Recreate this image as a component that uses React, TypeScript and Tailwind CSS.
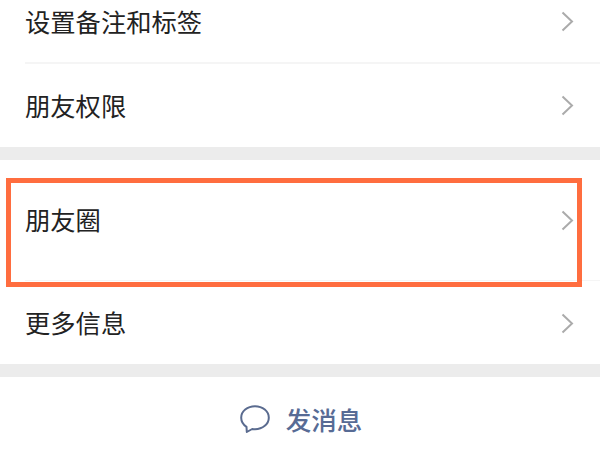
import React from "react";

const font = { fontFamily: '"Noto Sans CJK SC", "Liberation Sans", sans-serif' };

const Chevron = () => (
  <svg width="13" height="21" viewBox="0 0 13 21" fill="none" className="shrink-0">
    <path d="M1.5 1.5L11 10.5L1.5 19.5" stroke="#ababab" strokeWidth="2" />
  </svg>
);

const Row = ({ label, className }: { label: string; className: string }) => (
  <div className={`flex items-center justify-between pl-[25px] pr-[26px] ${className}`}>
    <span className="mb-[2px] text-[25.3px] leading-[32px] text-[#222222]">{label}</span>
    <Chevron />
  </div>
);

export default function App() {
  return (
    <div className="relative flex h-[450px] w-[600px] flex-col overflow-hidden bg-white" style={font}>
      {/* first group */}
      <Row label="设置备注和标签" className="h-[62px] pb-[19px]" />
      <div className="ml-[25px] h-[2px] bg-[#f5f5f5]" />
      <Row label="朋友权限" className="h-[83px]" />
      <div className="h-[13px] bg-[#ececec]" />

      {/* second group */}
      <Row label="朋友圈" className="h-[120px]" />
      <div className="ml-[25px] h-[1px] bg-[#f5f5f5]" />
      <Row label="更多信息" className="h-[83px] pt-[1px]" />
      <div className="h-[13px] bg-[#ececec]" />

      {/* send message */}
      <div className="flex flex-1 items-center justify-center gap-[16px] pl-[2px] pt-[20px] pb-[9px]">
        <svg width="30" height="28" viewBox="0 0 30 28" fill="none">
          <path
            d="M15 1.2C7.3 1.2 1.2 6.4 1.2 12.7C1.2 16.4 3.3 19.7 6.5 21.8L6.8 27L12.2 24C13.1 24.1 14 24.2 15 24.2C22.7 24.2 28.8 19 28.8 12.7C28.8 6.4 22.7 1.2 15 1.2Z"
            stroke="#5a6b8f"
            strokeWidth="2"
            strokeLinejoin="round"
          />
        </svg>
        <span className="text-[25.5px] leading-[32px] font-medium text-[#576b95]">发消息</span>
      </div>

      {/* highlight box */}
      <div className="absolute left-[6px] top-[178px] h-[109px] w-[576px] border-[5px] border-[#ff6d3f]" />
    </div>
  );
}
